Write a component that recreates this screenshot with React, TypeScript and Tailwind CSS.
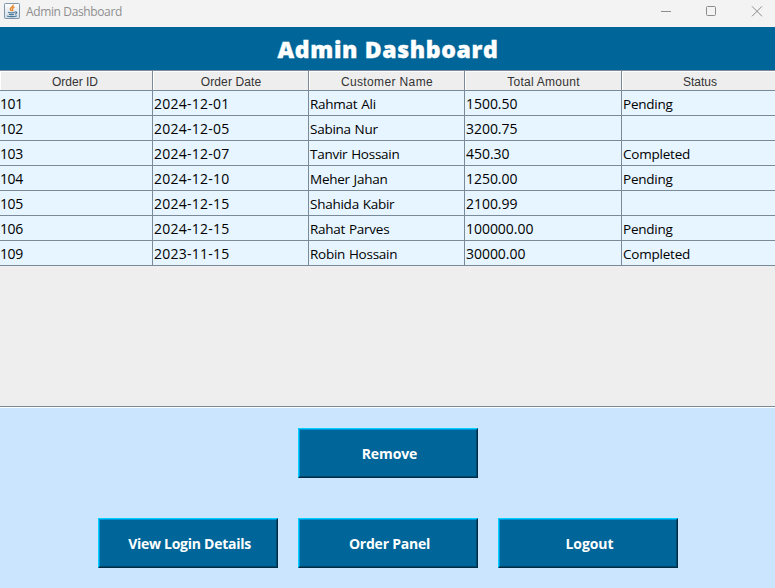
const columns = [
  { label: 'Order ID', head: 'w-[153px] pr-[2px]' },
  { label: 'Order Date', head: 'w-[156px] tracking-[0.1px] pl-px' },
  { label: 'Customer Name', head: 'w-[156px] tracking-[0.37px] pl-px' },
  { label: 'Total Amount', head: 'w-[157px] tracking-[0.27px] pl-px' },
  { label: 'Status', head: 'w-[157px]' },
];

const rows: string[][] = [
  ['101', '2024-12-01', 'Rahmat Ali', '1500.50', 'Pending'],
  ['102', '2024-12-05', 'Sabina Nur', '3200.75', ''],
  ['103', '2024-12-07', 'Tanvir Hossain', '450.30', 'Completed'],
  ['104', '2024-12-10', 'Meher Jahan', '1250.00', 'Pending'],
  ['105', '2024-12-15', 'Shahida Kabir', '2100.99', ''],
  ['106', '2024-12-15', 'Rahat Parves', '100000.00', 'Pending'],
  ['109', '2023-11-15', 'Robin Hossain', '30000.00', 'Completed'],
];

const cellStyles = [
  'w-[153px] text-[14px] tracking-[-0.4px]',
  'w-[156px] pl-px text-[14px] tracking-[0.25px]',
  'w-[156px] pl-px text-[13.5px] tracking-[-0.25px] [word-spacing:0.5px]',
  'w-[157px] pl-px text-[14px] tracking-[-0.04px]',
  'w-[157px] pl-px text-[13.5px] tracking-[-0.22px]',
];

function JavaIcon() {
  return (
    <svg width="16" height="16" viewBox="0 0 16 16" fill="none">
      <defs>
        <linearGradient id="cup" x1="0" y1="0" x2="0" y2="1">
          <stop offset="0" stopColor="#fdfdfe" />
          <stop offset="1" stopColor="#cfdde8" />
        </linearGradient>
      </defs>
      <rect x="0.5" y="0.5" width="15" height="15" rx="0.8" fill="url(#cup)" stroke="#8195a8" />
      <path d="M9.3 1.8C9.8 3.6 5.4 4.5 6.3 6.4c.3.7 1 1 1.2 1.7M10.5 4.2C8.6 4.8 7.9 5.6 8.6 6.6c.4.6.2 1-.2 1.5" stroke="#e8862e" strokeWidth="1.4" />
      <path d="M4 9.3c1.5.6 5.3.5 6.7 0M5 11.2c1.4.5 3.8.5 5 0M10.8 9c2.5-.6 2.4 1.7.1 2.2M3 13c2.4 1 7.6.9 9.8-.3" stroke="#4e7897" strokeWidth="1.2" />
    </svg>
  );
}

function SwingButton({ label, tracking }: { label: string; tracking: string }) {
  return (
    <button className="h-[50px] w-[180px] border border-t-[#00d0ff] border-r-[#002d45] border-b-[#002d45] border-l-[#00d0ff] bg-[#006699]">
      <span className="flex h-full w-full items-center justify-center border border-t-[#0092da] border-r-[#00476b] border-b-[#00476b] border-l-[#0092da] pt-px pl-[3px]">
        <span className={`text-[14px] leading-5 font-bold whitespace-nowrap text-white ${tracking}`}>{label}</span>
      </span>
    </button>
  );
}

export default function App() {
  return (
    <div className="flex h-[588px] w-[775px] flex-col overflow-hidden bg-[#eeeeee] font-['Open_Sans',sans-serif]">
      <header className="flex h-[27px] shrink-0 items-start bg-[#f3f3f3] pl-1 text-[#8f8f8f]">
        <div className="pt-[3px]">
          <JavaIcon />
        </div>
        <span className="ml-[6px] pt-1 text-[12px] leading-4 tracking-[-0.37px]">Admin Dashboard</span>
        <svg className="ml-auto" width="115" height="24" viewBox="0 0 115 24" fill="none" stroke="#8c8c8c">
          <path d="M1 11.5h10" />
          <rect x="46.5" y="6.5" width="9" height="9" rx="1" />
          <path d="M92 6.3l10 10M102 6.3l-10 10" />
        </svg>
      </header>
      <h1 className="flex h-[43px] shrink-0 items-center justify-center bg-[#006699] pt-px pl-px text-[23px] leading-8 font-extrabold tracking-[0.65px] text-white [-webkit-text-stroke:0.4px_#ffffff]">
        Admin Dashboard
      </h1>
      <div className="flex h-[21px] w-[779px] shrink-0 border-t border-[#7a8a99] font-['Liberation_Sans',sans-serif] text-[12px] text-[#333333]">
        {columns.map((c) => (
          <div key={c.label} className={`flex shrink-0 items-center justify-center border-r border-b border-[#7a8a99] pt-[2px] shadow-[inset_1px_1px_0_#ffffff] ${c.head}`}>
            {c.label}
          </div>
        ))}
      </div>
      <div className="w-[779px] shrink-0 bg-[#e6f5ff]">
        {rows.map((row, r) => (
          <div key={r} className="flex h-[25px]">
            {row.map((text, c) => (
              <div key={c} className={`flex shrink-0 items-center border-r border-b border-[#7a8a99] pt-[2px] leading-5 whitespace-nowrap text-black ${cellStyles[c]}`}>
                {text}
              </div>
            ))}
          </div>
        ))}
      </div>
      <div className="flex-1" />
      <footer className="flex h-[182px] shrink-0 flex-col items-center gap-10 border-t border-[#7a8a99] bg-[#cce5ff] pt-[21px] pl-px shadow-[inset_0_1px_0_#ffffff]">
        <SwingButton label="Remove" tracking="tracking-[-0.1px]" />
        <div className="flex gap-5">
          <SwingButton label="View Login Details" tracking="tracking-[-0.27px]" />
          <SwingButton label="Order Panel" tracking="tracking-[-0.23px]" />
          <SwingButton label="Logout" tracking="tracking-[-0.08px]" />
        </div>
      </footer>
    </div>
  );
}
